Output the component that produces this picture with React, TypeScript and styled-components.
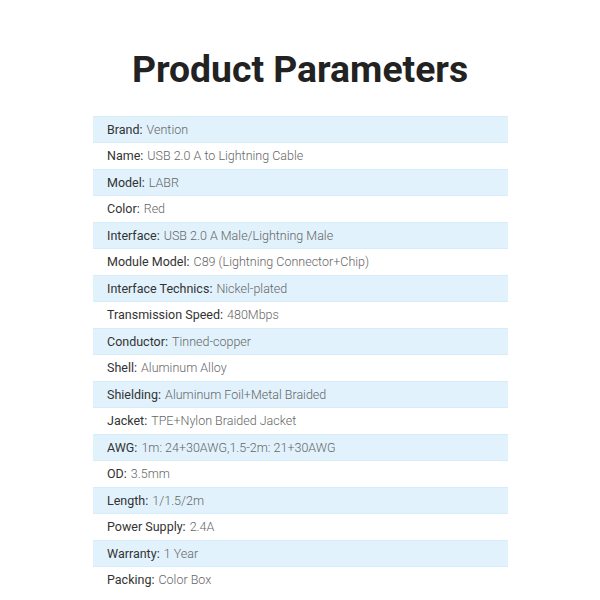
import React from "react";
import styled, { createGlobalStyle } from "styled-components";

const GlobalStyle = createGlobalStyle`
  html, body {
    margin: 0;
    padding: 0;
    background: #ffffff;
  }
  body {
    font-family: Roboto, "Liberation Sans", Arial, sans-serif;
  }
`;

const Page = styled.div`
  width: 600px;
  height: 600px;
  display: flex;
  flex-direction: column;
  align-items: center;
  overflow: hidden;
`;

const Title = styled.h1`
  margin: 47px 0 0;
  height: 69px;
  font-size: 37.3px;
  font-weight: 700;
  line-height: 44px;
  color: #222222;
`;

const Table = styled.div`
  width: 415px;
  margin-left: 1px;
  display: flex;
  flex-direction: column;
`;

const Row = styled.div<{ $shaded: boolean }>`
  height: 26.5px;
  box-sizing: border-box;
  display: flex;
  align-items: center;
  padding-left: 14px;
  font-size: 12.5px;
  background: ${(p) => (p.$shaded ? "#e1f2fc" : "#ffffff")};
  border-top: 1px solid ${(p) => (p.$shaded ? "#d6ecf8" : "transparent")};
  border-bottom: 1px solid ${(p) => (p.$shaded ? "#d6ecf8" : "transparent")};
`;

const Label = styled.span`
  color: #333333;
  font-weight: 400;
`;

const Value = styled.span`
  color: #666666;
  font-weight: 300;
  margin-left: 4px;
`;

const params: [string, string][] = [
  ["Brand", "Vention"],
  ["Name", "USB 2.0 A to Lightning Cable"],
  ["Model", "LABR"],
  ["Color", "Red"],
  ["Interface", "USB 2.0 A Male/Lightning Male"],
  ["Module Model", "C89 (Lightning Connector+Chip)"],
  ["Interface Technics", "Nickel-plated"],
  ["Transmission Speed", "480Mbps"],
  ["Conductor", "Tinned-copper"],
  ["Shell", "Aluminum Alloy"],
  ["Shielding", "Aluminum Foil+Metal Braided"],
  ["Jacket", "TPE+Nylon Braided Jacket"],
  ["AWG", "1m: 24+30AWG,1.5-2m: 21+30AWG"],
  ["OD", "3.5mm"],
  ["Length", "1/1.5/2m"],
  ["Power Supply", "2.4A"],
  ["Warranty", "1 Year"],
  ["Packing", "Color Box"],
];

export default function App() {
  return (
    <Page>
      <GlobalStyle />
      <Title>Product Parameters</Title>
      <Table>
        {params.map(([label, value], i) => (
          <Row key={label} $shaded={i % 2 === 0}>
            <Label>{label}:</Label>
            <Value>{value}</Value>
          </Row>
        ))}
      </Table>
    </Page>
  );
}
